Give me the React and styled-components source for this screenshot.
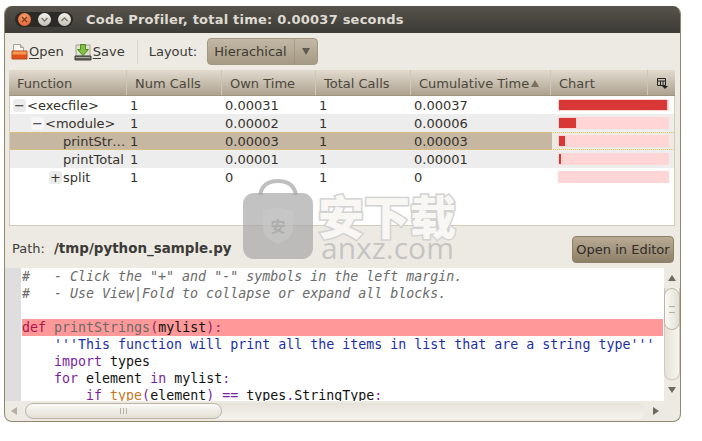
import styled, { createGlobalStyle } from "styled-components"

const GlobalStyle = createGlobalStyle`
  html, body {
    margin: 0;
    background: #fff;
    font-family: "DejaVu Sans", sans-serif;
  }
`

const Page = styled.div`
  position: relative;
  width: 702px;
  height: 441px;
  padding: 6px 0 0 4px;
  box-sizing: border-box;
  overflow: hidden;
`

const Window = styled.div`
  width: 677px;
  height: 416px;
  box-sizing: border-box;
  display: flex;
  flex-direction: column;
  background: #edeae3;
  border: 1px solid #91866f;
  border-top: none;
  border-radius: 8px;
  overflow: hidden;
`

const TitleBar = styled.div`
  height: 27px;
  flex: none;
  display: flex;
  align-items: center;
  background: linear-gradient(#57534b, #3c3b37);
`

const ButtonPill = styled.div`
  display: flex;
  align-items: center;
  gap: 7px;
  height: 15px;
  margin-left: 10px;
  padding: 0 2px 0 3px;
  border-radius: 8px;
  background: #2b2a27;
`

const WinButton = styled.div`
  width: 13px;
  height: 13px;
  border-radius: 50%;
  display: flex;
  align-items: center;
  justify-content: center;
  background: ${(p) => (p.$close ? "radial-gradient(circle at 50% 30%, #f6a06c, #e2562a)" : "linear-gradient(#f4f2ee, #c4c0b6)")};
`

const Title = styled.div`
  margin-left: 13px;
  color: #dfdbd2;
  font-size: 13px;
  font-weight: bold;
  letter-spacing: 0.22px;
  white-space: nowrap;
`

const Toolbar = styled.div`
  height: 37px;
  flex: none;
  display: flex;
  align-items: center;
  padding-left: 6px;
  color: #3c3b37;
  font-size: 13px;
`

const ToolItem = styled.div`
  display: flex;
  align-items: center;
  gap: 1px;
  margin-right: ${(p) => p.$gap}px;
  u { text-decoration-thickness: 1px; text-underline-offset: 2px; }
`

const Separator = styled.div`
  width: 1px;
  height: 24px;
  background: #dcd7cd;
  margin-right: 11px;
`

const Combo = styled.div`
  width: 111px;
  height: 27px;
  box-sizing: border-box;
  margin-left: 10px;
  display: flex;
  align-items: stretch;
  border: 1px solid #a3977f;
  border-radius: 4px;
  background: linear-gradient(#c2b8a5, #a69a85);
  color: #3c3830;
`

const ComboText = styled.div`
  width: 87px;
  display: flex;
  align-items: center;
  padding-left: 6px;
  box-sizing: border-box;
  border-right: 1px solid #94887380;
`

const ComboArrow = styled.div`
  flex: 1;
  display: flex;
  align-items: center;
  justify-content: center;
  &::after {
    content: "";
    border-left: 4px solid transparent;
    border-right: 4px solid transparent;
    border-top: 7px solid #5f5a4e;
  }
`

const TablePanel = styled.div`
  margin: 0 5px 0 4px;
  height: 156px;
  flex: none;
  box-sizing: border-box;
  background: #fff;
  border: 1px solid #d5ccbc;
  border-top: none;
`

const HeaderRow = styled.div`
  display: grid;
  grid-template-columns: 118px 95px 94px 95px 140px 97px 1fr;
  margin: 0 -1px;
  height: 26px;
  background: linear-gradient(#e2dbce, #ada290);
  border-bottom: 1px solid #9f947f;
  box-sizing: border-box;
  color: #4c473c;
  font-size: 13px;
`

const HeaderCell = styled.div`
  display: flex;
  align-items: center;
  gap: 2px;
  padding: 1px 0 0 8px;
  border-right: 1px solid #cfc6b5;
  white-space: nowrap;
  &:last-child { border-right: none; }
`

const SortArrow = styled.span`
  border-left: 4px solid transparent;
  border-right: 4px solid transparent;
  border-bottom: 7px solid #777061;
  margin-top: 1px;
`

const Row = styled.div`
  display: grid;
  grid-template-columns: 117px 95px 94px 95px 140px 1fr;
  height: 18px;
  box-sizing: border-box;
  align-items: center;
  color: #35322b;
  font-size: 13px;
  background: ${(p) => (p.$odd ? "#ededed" : "#fff")};
  ${(p) =>
    p.$selected &&
    `
    background: linear-gradient(90deg, #c6b7a3 542px, #edeae3 542px);
    border-top: 1px dotted #e8c45a;
    border-bottom: 1px dotted #e8c45a;
  `}
`

const NameCell = styled.div`
  display: flex;
  align-items: center;
  padding-left: ${(p) => p.$indent}px;
  white-space: nowrap;
`

const Expander = styled.span`
  width: 13px;
  height: 13px;
  margin-right: 1px;
  flex: none;
  display: flex;
  align-items: center;
  justify-content: center;
  background: ${(p) => (p.$odd ? "#f6f6f6" : "#ebebeb")};
  border-radius: 3px;
  font-size: 13px;
  line-height: 13px;
`

const Cell = styled.div`
  padding-left: 3px;
`

const ChartTrack = styled.div`
  width: 111px;
  height: 12px;
  margin-left: 7px;
  padding: 1px;
  box-sizing: border-box;
  background: #ffd5d5;
`

const ChartFill = styled.div`
  height: 100%;
  background: #d93636;
`

const PathBar = styled.div`
  height: 42px;
  flex: none;
  display: flex;
  align-items: center;
  justify-content: space-between;
  padding: 0 6px 0 7px;
  color: #3c3b37;
  font-size: 13px;
`

const PathLabel = styled.div`
  margin-top: 2px;
`

const PathValue = styled.b`
  margin-left: 9px;
  font-size: 13.45px;
`

const EditorButton = styled.button`
  width: 102px;
  height: 27px;
  margin-top: 5px;
  padding: 0;
  border: 1px solid #8f8168;
  border-radius: 4px;
  background: linear-gradient(#b9ab94, #8e7f69);
  color: #2f2c26;
  font: 13px "DejaVu Sans", sans-serif;
  white-space: nowrap;
`

const CodeArea = styled.div`
  height: 133px;
  flex: none;
  display: grid;
  grid-template-columns: 1fr 16px;
`

const CodeView = styled.div`
  display: flex;
  overflow: hidden;
  background: #fff;
`

const Gutter = styled.div`
  width: 16px;
  flex: none;
  margin-right: 1px;
  background: #dedede;
`

const CodeLines = styled.div`
  flex: 1;
  font: 13.3px/17px "DejaVu Sans Mono", monospace;
  white-space: pre;
`

const CodeLine = styled.div`
  height: 17px;
  margin-right: 1px;
  background: ${(p) => (p.$hit ? "#ff9999" : "transparent")};
`

const Tok = styled.span`
  color: ${(p) => p.$c};
  font-style: ${(p) => (p.$i ? "italic" : "normal")};
`

const VScroll = styled.div`
  display: flex;
  flex-direction: column;
  align-items: center;
  background: #edeae3;
`

const ScrollArrow = styled.div`
  flex: none;
  width: 0;
  height: 0;
  border: 4px solid transparent;
  ${(p) => p.$dir === "up" && "border-bottom: 6px solid #6f6a5e; border-top: none; margin: 7px 0 7px;"}
  ${(p) => p.$dir === "down" && "border-top: 6px solid #6f6a5e; border-bottom: none; margin-top: 7px;"}
  ${(p) => p.$dir === "left" && "border-right: 6px solid #b5ae9f; border-left: none; margin: 0 8px 0 6px;"}
  ${(p) => p.$dir === "right" && "border-left: 6px solid #6f6a5e; border-right: none; margin: 0 6px 0 8px;"}
`

const VTrough = styled.div`
  width: 16px;
  height: 92px;
  flex: none;
  box-sizing: border-box;
  border: 1px solid #cfc9bb;
  border-top: none;
  border-radius: 0 0 7px 7px;
  background: linear-gradient(90deg, #e6e2d9, #f6f4ef);
`

const VThumb = styled.div`
  height: 42px;
  box-sizing: border-box;
  margin: 0 -1px;
  display: flex;
  align-items: center;
  justify-content: center;
  border: 1px solid #bdb5a3;
  border-radius: 8px;
  background: linear-gradient(90deg, #fbfaf7, #e3dfd5);
  &::after {
    content: "";
    width: 6px;
    height: 5px;
    border-top: 1px solid #b8b1a1;
    border-bottom: 1px solid #b8b1a1;
  }
`

const HScroll = styled.div`
  height: 19px;
  flex: none;
  display: flex;
  align-items: center;
`

const HTrough = styled.div`
  width: 620px;
  height: 16px;
  flex: none;
  box-sizing: border-box;
  border-radius: 8px;
  background: linear-gradient(#e6e2d9, #f6f4ef);
`

const HThumb = styled.div`
  width: 197px;
  height: 16px;
  box-sizing: border-box;
  display: flex;
  align-items: center;
  justify-content: center;
  border: 1px solid #bdb5a3;
  border-radius: 8px;
  background: linear-gradient(#fbfaf7, #e3dfd5);
  &::after {
    content: "";
    width: 7px;
    height: 6px;
    background: repeating-linear-gradient(90deg, #b8b1a1 0 1px, transparent 1px 3px);
  }
`

const Watermark = styled.div`
  position: absolute;
  left: 243px;
  top: 179px;
  display: flex;
  gap: 5px;
  pointer-events: none;
`

const WatermarkText = styled.div`
  display: flex;
  flex-direction: column;
  margin-top: 10px;
`

const WatermarkCjk = styled.div`
  width: 140px;
  font: 900 46px/50px "Noto Sans CJK SC", sans-serif;
  color: #f8f7f4;
  -webkit-text-stroke: 3px #d2d2d2;
  paint-order: stroke fill;
  white-space: nowrap;
`

const WatermarkUrl = styled.div`
  margin: -5px 0 0 3px;
  font: 30px/28px "Open Sans", sans-serif;
  color: rgba(190, 190, 190, 0.85);
`

const WatermarkShield = styled.text`
  font: bold 15px "Noto Sans CJK SC", sans-serif;
`

const rows = [
  { name: "<execfile>", indent: 3, exp: "−", calls: "1", own: "0.00031", total: "1", cum: "0.00037", bar: 108 },
  { name: "<module>", indent: 21, exp: "−", odd: true, calls: "1", own: "0.00002", total: "1", cum: "0.00006", bar: 17 },
  { name: "printStr…", indent: 53, selected: true, calls: "1", own: "0.00003", total: "1", cum: "0.00003", bar: 6 },
  { name: "printTotal", indent: 53, odd: true, calls: "1", own: "0.00001", total: "1", cum: "0.00001", bar: 2 },
  { name: "split", indent: 39, exp: "+", calls: "1", own: "0", total: "1", cum: "0", bar: 0 },
]

const KW = "#7b1fa2"
const STR = "#1d2fa8"
const CMT = "#6b6b6b"

function OpenIcon() {
  return (
    <svg width="17" height="17" viewBox="0 0 17 17">
      <path d="M2.5 1.5h7l3 3v4h-10z" fill="#f8f6f2" stroke="#a8a295" />
      <path d="M9.5 1.5v3h3" fill="#dcd8cf" stroke="#a8a295" />
      <path d="M1 8h15v8H1z" fill="#e2511c" stroke="#b5441a" />
      <path d="M1.5 8.5h14v3h-14z" fill="#f59a52" />
    </svg>
  )
}

function SaveIcon() {
  return (
    <svg width="18" height="18" viewBox="0 0 18 18">
      <path d="M2 2h14v11H2z" fill="#dfe3d4" stroke="#a3a596" />
      <path d="M6.5 1.5h5v5h3L9 12.5 3.5 6.5h3z" fill="#84c046" stroke="#4f8a1f" />
      <path d="M1 13h16v4H1z" fill="#5f5f5a" stroke="#44443f" />
      <path d="M2 14h14v1H2z" fill="#a9a9a3" />
    </svg>
  )
}

function ColumnsIcon() {
  return (
    <svg width="12" height="12" viewBox="0 0 12 12">
      <path d="M1.5 1.5h8v7h-8zM1.5 4h8M4.5 4v4.5M7 4v4.5" fill="none" stroke="#222" />
      <path d="M6 9h6l-3 3z" fill="#222" />
    </svg>
  )
}

function Glyph({ d }) {
  return (
    <svg width="9" height="9" viewBox="0 0 9 9">
      <path d={d} fill="none" stroke="#7b766a" strokeWidth="1.4" />
    </svg>
  )
}

function App() {
  return (
    <Page>
      <GlobalStyle />
      <Window>
        <TitleBar>
          <ButtonPill>
            <WinButton $close>
              <svg width="7" height="7" viewBox="0 0 7 7">
                <path d="M1 1l5 5M6 1L1 6" stroke="#7a3a20" strokeWidth="1.3" />
              </svg>
            </WinButton>
            <WinButton>
              <Glyph d="M1.5 3l3 3 3-3" />
            </WinButton>
            <WinButton>
              <Glyph d="M1.5 6l3-3 3 3" />
            </WinButton>
          </ButtonPill>
          <Title>Code Profiler, total time: 0.00037 seconds</Title>
        </TitleBar>

        <Toolbar>
          <ToolItem $gap={10}>
            <OpenIcon />
            <span><u>O</u>pen</span>
          </ToolItem>
          <ToolItem $gap={12}>
            <SaveIcon />
            <span><u>S</u>ave</span>
          </ToolItem>
          <Separator />
          <span>Layout:</span>
          <Combo>
            <ComboText>Hierachical</ComboText>
            <ComboArrow />
          </Combo>
        </Toolbar>

        <TablePanel>
          <HeaderRow>
            <HeaderCell>Function</HeaderCell>
            <HeaderCell>Num Calls</HeaderCell>
            <HeaderCell>Own Time</HeaderCell>
            <HeaderCell>Total Calls</HeaderCell>
            <HeaderCell>Cumulative Time<SortArrow /></HeaderCell>
            <HeaderCell>Chart</HeaderCell>
            <HeaderCell><ColumnsIcon /></HeaderCell>
          </HeaderRow>
          {rows.map((r) => (
            <Row key={r.name} $odd={r.odd} $selected={r.selected}>
              <NameCell $indent={r.indent}>
                {r.exp && <Expander $odd={r.odd}>{r.exp}</Expander>}
                {r.name}
              </NameCell>
              <Cell>{r.calls}</Cell>
              <Cell>{r.own}</Cell>
              <Cell>{r.total}</Cell>
              <Cell>{r.cum}</Cell>
              <ChartTrack>
                <ChartFill style={{ width: r.bar }} />
              </ChartTrack>
            </Row>
          ))}
        </TablePanel>

        <PathBar>
          <PathLabel>
            Path:<PathValue>/tmp/python_sample.py</PathValue>
          </PathLabel>
          <EditorButton>Open in Editor</EditorButton>
        </PathBar>

        <CodeArea>
          <CodeView>
            <Gutter />
            <CodeLines>
              <CodeLine><Tok $c={CMT} $i>{'#   - Click the "+" and "-" symbols in the left margin.'}</Tok></CodeLine>
              <CodeLine><Tok $c={CMT} $i>{"#   - Use View|Fold to collapse or expand all blocks."}</Tok></CodeLine>
              <CodeLine />
              <CodeLine $hit>
                <Tok $c="#b0104a">def</Tok> <Tok $c="#6a6a6a">printStrings</Tok>
                <Tok $c="#8a2a6a">(</Tok><Tok $c="#111">mylist</Tok><Tok $c="#8a2a6a">):</Tok>
              </CodeLine>
              <CodeLine><Tok $c={STR}>{"    '''This function will print all the items in list that are a string type'''"}</Tok></CodeLine>
              <CodeLine>{"    "}<Tok $c={KW}>import</Tok> <Tok $c="#111">types</Tok></CodeLine>
              <CodeLine>
                {"    "}<Tok $c={KW}>for</Tok> <Tok $c="#111">element</Tok> <Tok $c={KW}>in</Tok> <Tok $c="#111">mylist</Tok><Tok $c={KW}>:</Tok>
              </CodeLine>
              <CodeLine>
                {"        "}<Tok $c={KW}>if</Tok> <Tok $c="#c8761a">type</Tok><Tok $c={KW}>(</Tok><Tok $c="#111">element</Tok><Tok $c={KW}>)</Tok> <Tok $c={KW}>==</Tok> <Tok $c="#111">types</Tok><Tok $c={KW}>.</Tok><Tok $c="#111">StringType</Tok><Tok $c={KW}>:</Tok>
              </CodeLine>
            </CodeLines>
          </CodeView>
          <VScroll>
            <ScrollArrow $dir="up" />
            <VTrough>
              <VThumb />
            </VTrough>
            <ScrollArrow $dir="down" />
          </VScroll>
        </CodeArea>

        <HScroll>
          <ScrollArrow $dir="left" />
          <HTrough>
            <HThumb />
          </HTrough>
          <ScrollArrow $dir="right" />
        </HScroll>
      </Window>

      <Watermark>
        <svg width="70" height="80" viewBox="0 0 70 80">
          <path d="M17 16C19 5 27 2 35 2s16 3 18 14" fill="none" stroke="rgba(175,175,175,.8)" strokeWidth="4" />
          <rect x="0" y="14" width="70" height="66" rx="11" fill="rgba(165,165,165,.68)" />
          <path d="M35 28l15 4v16c0 9-7 14-15 17-8-3-15-8-15-17V32z" fill="rgba(200,200,200,.6)" />
          <WatermarkShield x="35" y="53" textAnchor="middle" fill="rgba(170,170,170,.85)">安</WatermarkShield>
        </svg>
        <WatermarkText>
          <WatermarkCjk>安下载</WatermarkCjk>
          <WatermarkUrl>anxz.com</WatermarkUrl>
        </WatermarkText>
      </Watermark>
    </Page>
  )
}

export default App
